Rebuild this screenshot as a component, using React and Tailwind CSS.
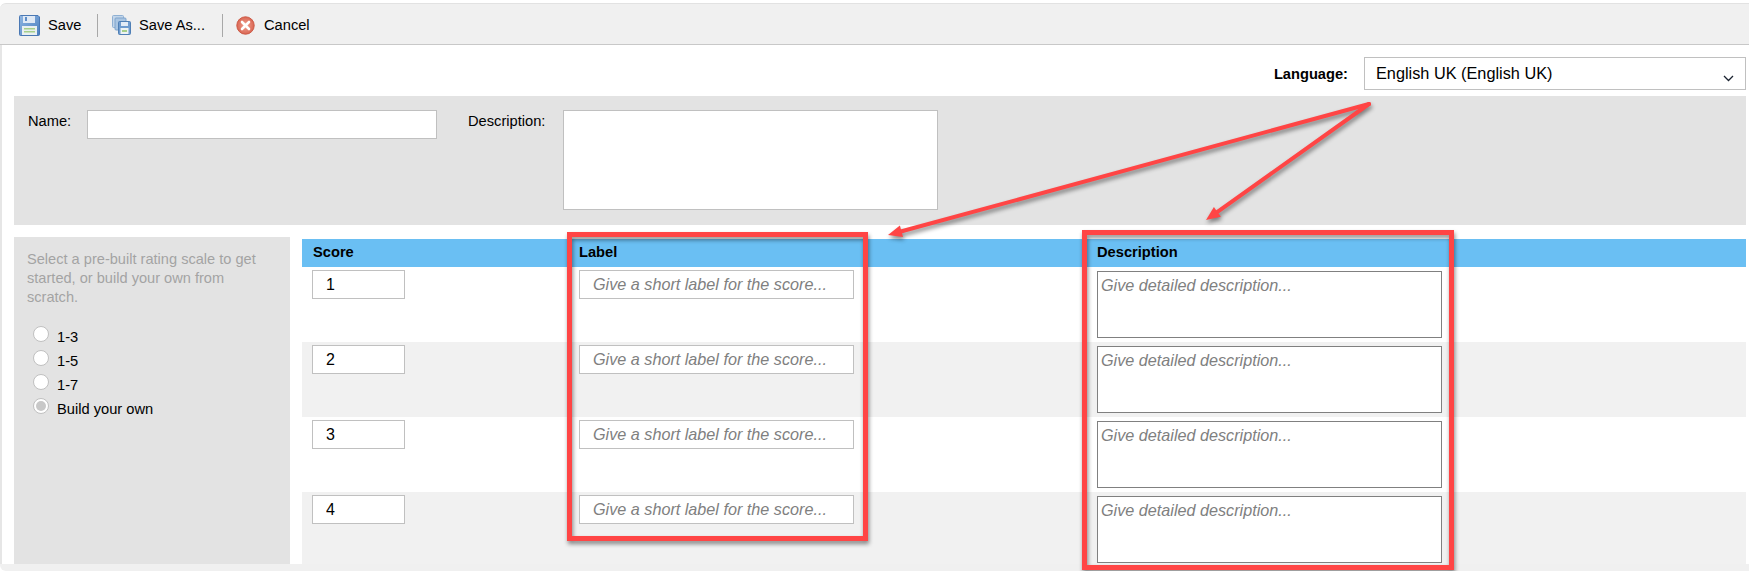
const rows = [1, 2, 3, 4];

function SaveIcon() {
  return (
    <svg width="21" height="21" viewBox="0 0 21 21" className="shrink-0">
      <defs>
        <linearGradient id="disk" x1="0" y1="0" x2="1" y2="1">
          <stop offset="0" stopColor="#8fb6e2" />
          <stop offset="1" stopColor="#4a7fc0" />
        </linearGradient>
      </defs>
      <path d="M0.5 1.5 Q0.5 0.5 1.5 0.5 H19 L20.5 2 V19.5 Q20.5 20.5 19.5 20.5 H1.5 Q0.5 20.5 0.5 19.5 Z" fill="url(#disk)" stroke="#4a78b4" />
      <rect x="4" y="1" width="12" height="7" fill="#dfe9f5" />
      <rect x="6" y="2" width="2" height="4" fill="#5d8cc6" />
      <rect x="3" y="11" width="15" height="9" fill="#e9f0f0" />
      <rect x="5" y="13" width="11" height="1.5" fill="#a6cf8a" />
      <rect x="5" y="16" width="11" height="1.5" fill="#a6cf8a" />
    </svg>
  );
}

function SaveAsIcon() {
  return (
    <svg width="19" height="20" viewBox="0 0 19 20" className="shrink-0">
      <rect x="0.5" y="0.5" width="11" height="12" rx="1" fill="#c3d6ea" stroke="#8fb0d3" />
      <rect x="3" y="3" width="11" height="12" rx="1" fill="#a9c5e2" stroke="#7fa4cc" />
      <rect x="6.5" y="6.5" width="12" height="13" rx="1" fill="#6f9ccf" stroke="#4f7fb5" />
      <rect x="9" y="7" width="7" height="4" fill="#e3ecf6" />
      <rect x="8.5" y="13" width="8" height="6" fill="#eef3f3" />
      <rect x="10" y="15" width="5" height="2" fill="#a6cf8a" />
    </svg>
  );
}

function CancelIcon() {
  return (
    <svg width="19" height="19" viewBox="0 0 19 19" className="shrink-0">
      <defs>
        <radialGradient id="stop" cx="0.5" cy="0.5" r="0.55">
          <stop offset="0" stopColor="#f0a596" />
          <stop offset="1" stopColor="#d8604c" />
        </radialGradient>
      </defs>
      <circle cx="9.5" cy="9.5" r="8.7" fill="url(#stop)" stroke="#cc5a46" strokeWidth="1" />
      <path d="M6 6 L13 13 M13 6 L6 13" stroke="#fff" strokeWidth="2.6" strokeLinecap="round" />
    </svg>
  );
}

function Toolbar() {
  return (
    <div className="mt-[3px] flex h-[42px] shrink-0 items-center rounded-tl-[6px] border-t border-b border-t-[#e2e2e2] border-b-[#c8c8c8] bg-[#f0f0f0] pt-[2px] text-[14.67px] text-black">
      <div className="ml-[19px] flex w-[78px] items-center gap-[8px]">
        <SaveIcon />
        <span>Save</span>
      </div>
      <div className="h-[23px] w-px bg-[#a8a8a8]" />
      <div className="ml-[14px] flex w-[110px] items-center gap-[8px]">
        <SaveAsIcon />
        <span>Save As...</span>
      </div>
      <div className="h-[23px] w-px bg-[#a8a8a8]" />
      <div className="ml-[13px] flex items-center gap-[9px]">
        <CancelIcon />
        <span>Cancel</span>
      </div>
    </div>
  );
}

function LanguageRow() {
  return (
    <div className="mt-[12px] flex h-[33px] shrink-0 items-center justify-end">
      <span className="mr-[16px] pt-[1px] text-[14.67px] font-bold text-black">Language:</span>
      <div className="relative h-[33px] w-[382px]">
        <select className="h-full w-full appearance-none border border-[#c0c0c0] bg-white pl-[11px] text-[16.3px] text-black outline-none">
          <option>English UK (English UK)</option>
        </select>
        <svg width="11" height="7" viewBox="0 0 11 7" className="absolute right-[12px] top-[18px]">
          <path d="M1 1 L5.5 5.5 L10 1" fill="none" stroke="#1a2230" strokeWidth="1.3" />
        </svg>
      </div>
    </div>
  );
}

function DetailsPanel() {
  return (
    <div className="mt-[6px] flex h-[129px] shrink-0 items-start bg-[#e3e3e3] pl-[14px] pt-[14px] text-[14.67px] text-black">
      <label className="w-[59px]">Name:</label>
      <input className="h-[29px] w-[350px] border border-[#c0c0c0] bg-white outline-none" />
      <label className="ml-[31px] w-[95px]">Description:</label>
      <textarea className="h-[100px] w-[375px] resize-none border border-[#c0c0c0] bg-white outline-none" />
    </div>
  );
}

function Radio({ label, checked }) {
  return (
    <div className="flex h-[24px] items-start">
      <span className="flex h-[16px] w-[16px] items-center justify-center rounded-full border border-[#c0c0c0] bg-white">
        {checked && <span className="h-[10px] w-[10px] rounded-full bg-[#c8c8c8]" />}
      </span>
      <span className="ml-[8px] pt-[2px] text-[14.67px] leading-[19px] text-black">{label}</span>
    </div>
  );
}

function ScalePicker() {
  return (
    <div className="h-[327px] w-[276px] shrink-0 bg-[#e3e3e3] pl-[13px] pr-[20px] pt-[13px]">
      <p className="text-[14.6px] leading-[19px] text-[#a3a3a3]">
        Select a pre-built rating scale to get started, or build your own from scratch.
      </p>
      <div className="ml-[6px] mt-[19px]">
        <Radio label="1-3" />
        <Radio label="1-5" />
        <Radio label="1-7" />
        <Radio label="Build your own" checked />
      </div>
    </div>
  );
}

function ScoreRow({ score, shaded }) {
  return (
    <div className={`grid h-[75px] shrink-0 grid-cols-[267px_518px_1fr] ${shaded ? "bg-[#f1f1f1]" : "bg-white"}`}>
      <div className="pl-[10px] pt-[3px]">
        <input
          defaultValue={score}
          className="h-[29px] w-[93px] border border-[#c0c0c0] bg-white pl-[13px] text-[16px] text-black outline-none"
        />
      </div>
      <div className="pl-[10px] pt-[3px]">
        <input
          placeholder="Give a short label for the score..."
          className="h-[29px] w-[275px] border border-[#c0c0c0] bg-white pl-[13px] text-[16.2px] italic outline-none placeholder:text-[#808080]"
        />
      </div>
      <div className="pl-[10px] pt-[4px]">
        <textarea
          placeholder="Give detailed description..."
          className="block h-[67px] w-[345px] resize-none border border-[#808080] bg-white pl-[3px] pt-[1px] text-[16.2px] italic outline-none placeholder:text-[#808080]"
        />
      </div>
    </div>
  );
}

function ScoreTable() {
  return (
    <div className="ml-[12px] mt-[2px] flex min-w-0 flex-1 flex-col">
      <div className="grid h-[28px] shrink-0 grid-cols-[267px_518px_1fr] items-center bg-[#6abff3] pb-[2px] text-[14.67px] font-bold text-black">
        <span className="pl-[11px]">Score</span>
        <span className="pl-[10px]">Label</span>
        <span className="pl-[10px]">Description</span>
      </div>
      {rows.map((r) => (
        <ScoreRow key={r} score={r} shaded={r % 2 === 0} />
      ))}
    </div>
  );
}

function Annotations() {
  return (
    <>
      <div className="absolute left-[567px] top-[232px] h-[309px] w-[301px] border-[5px] border-[#ff4545] drop-shadow-[1px_3px_2px_rgba(0,0,0,0.45)]" />
      <div className="absolute left-[1082px] top-[230px] h-[340px] w-[372px] border-[5px] border-[#ff4545] drop-shadow-[1px_3px_2px_rgba(0,0,0,0.45)]" />
      <svg
        width="1749"
        height="571"
        viewBox="0 0 1749 571"
        className="pointer-events-none absolute left-0 top-0 drop-shadow-[1px_3px_2px_rgba(0,0,0,0.45)]"
      >
        <path d="M1369 104 L898 232.3" stroke="#ff4545" strokeWidth="4" strokeLinecap="round" />
        <polygon points="888,235 899.9,225.5 903,237.1" fill="#ff4545" />
        <path d="M1369 104 L1215 213.6" stroke="#ff4545" strokeWidth="4" strokeLinecap="round" />
        <polygon points="1206,220 1213.9,207 1220.9,216.8" fill="#ff4545" />
      </svg>
    </>
  );
}

export default function App() {
  return (
    <div className="relative flex h-[571px] w-[1749px] flex-col overflow-hidden bg-white font-['Liberation_Sans',Arial,sans-serif]">
      <Toolbar />
      <div className="flex min-h-0 flex-1 flex-col border-l-2 border-[#e6e6e6] pl-[12px] pr-[3px]">
        <LanguageRow />
        <DetailsPanel />
        <div className="mt-[12px] flex min-h-0 flex-1 overflow-hidden">
          <ScalePicker />
          <ScoreTable />
        </div>
      </div>
      <div className="h-[7px] shrink-0 rounded-bl-[6px] bg-[#f0f0f0]" />
      <Annotations />
    </div>
  );
}
